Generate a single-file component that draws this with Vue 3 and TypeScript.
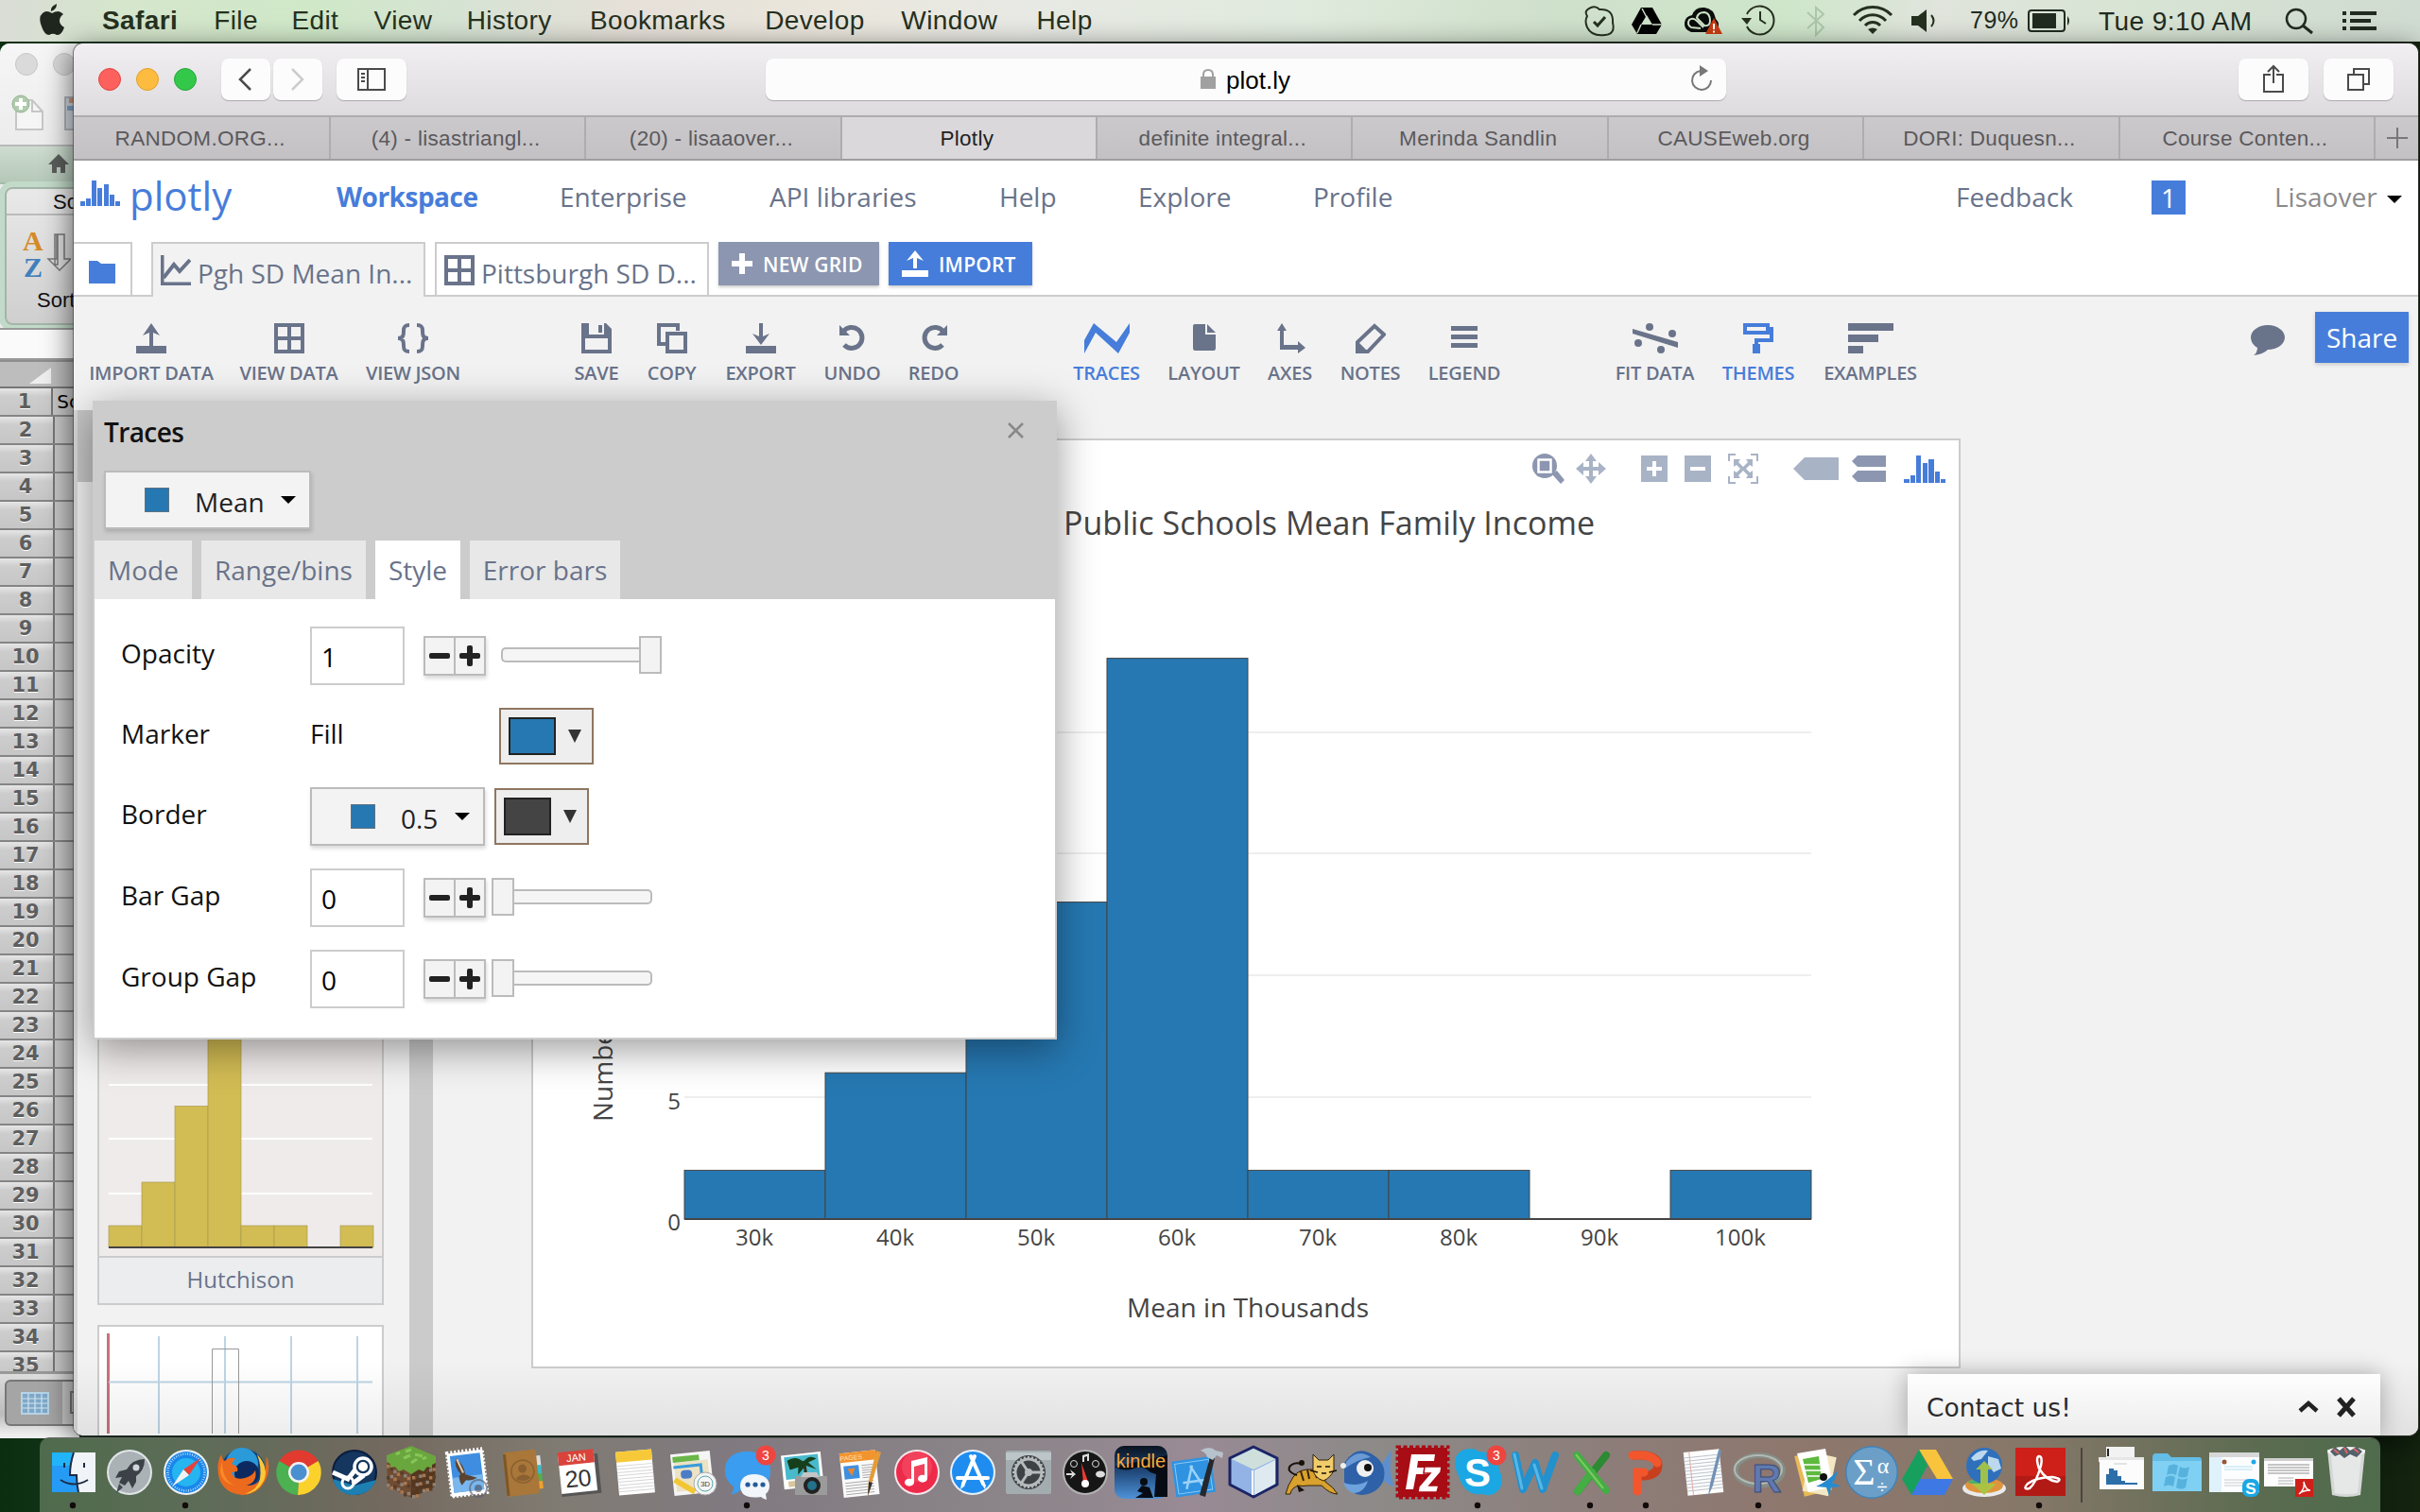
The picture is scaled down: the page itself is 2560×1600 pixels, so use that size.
<script setup lang="ts">
interface Tool { label: string; w: number; iw: number; art: string; on?: boolean }
interface DockItem { art: string; run?: boolean; badge?: string }

const S = '#69738a'
const menus = [
  { t: 'Safari', w: 80, b: true }, { t: 'File', w: 44 }, { t: 'Edit', w: 49 }, { t: 'View', w: 60 },
  { t: 'History', w: 92 }, { t: 'Bookmarks', w: 147 }, { t: 'Develop', w: 106 }, { t: 'Window', w: 105 }, { t: 'Help', w: 61 },
]
const tabs = ['RANDOM.ORG...', '(4) - lisastriangl...', '(20) - lisaaover...', 'Plotly', 'definite integral...', 'Merinda Sandlin', 'CAUSEweb.org', 'DORI: Duquesn...', 'Course Conten...']
const nav = [
  { t: 'Workspace', w: 147 }, { t: 'Enterprise', w: 133 }, { t: 'API libraries', w: 154 },
  { t: 'Help', w: 58 }, { t: 'Explore', w: 96 }, { t: 'Profile', w: 82 },
]
const gridArt = `<path fill="none" stroke="${S}" stroke-width="4" d="M2 2h28v28H2zM16 2v28M2 16h28"/>`
const tools: Tool[][] = [
  [
    { label: 'IMPORT DATA', w: 130, iw: 32, art: `<path fill="${S}" d="M0 24h32v8H0zM14 24V10l-7 3L16 0l9 13-7-3v14z"/>` },
    { label: 'VIEW DATA', w: 103, iw: 32, art: gridArt },
    { label: 'VIEW JSON', w: 102, iw: 32, art: `<path fill="none" stroke="${S}" stroke-width="4" d="M12 2C7 2 6 4 6 8s0 8-6 8c6 0 6 4 6 8s1 6 6 6M20 2c5 0 6 2 6 6s0 8 6 8c-6 0-6 4-6 8s-1 6-6 6"/>` },
  ],
  [
    { label: 'SAVE', w: 46, iw: 32, art: `<path fill="${S}" fill-rule="evenodd" d="M0 0h26l6 6v26H0zM8 0v12h16V0zM4 16v12h24V16z"/><path fill="${S}" d="M18 2h4v8h-4z"/>` },
    { label: 'COPY', w: 53, iw: 32, art: `<path fill="none" stroke="${S}" stroke-width="4" d="M10 22H2V2h20v6M11 11h19v19H11z"/>` },
    { label: 'EXPORT', w: 75, iw: 32, art: `<path fill="${S}" d="M0 24h32v8H0zM14 0h4v14l7-3-9 12-9-12 7 3z"/>` },
    { label: 'UNDO', w: 59, iw: 32, art: `<path fill="none" stroke="${S}" stroke-width="5" d="M6 9a11 11 0 1 1 1 14"/><path fill="${S}" d="M2 2v11h11z"/>` },
    { label: 'REDO', w: 53, iw: 32, art: `<path fill="none" stroke="${S}" stroke-width="5" d="M26 9a11 11 0 1 0-1 14"/><path fill="${S}" d="M30 2v11H19z"/>` },
  ],
  [
    { label: 'TRACES', w: 71, iw: 48, on: true, art: '<path fill="#477dda" d="M0 32V18L10 0l24 20L48 0v10L36 32 12 10z"/>' },
    { label: 'LAYOUT', w: 75, iw: 24, art: `<path fill="${S}" d="M0 3q0-2 2-2h11v11h11v14q0 3-2 3H2q-2 0-2-3zM15 1l9 9h-9z"/>` },
    { label: 'AXES', w: 47, iw: 32, art: `<path fill="${S}" d="M2 8L7 0l5 8H9v15h15v-4l8 7-8 6v-4H5V8z"/>` },
    { label: 'NOTES', w: 63, iw: 32, art: `<path fill="none" stroke="${S}" stroke-width="4" d="M20 3l10 9-17 18H2V20z"/><path fill="${S}" d="M3 20l4 4 5 5-3 3H0V22z"/>` },
    { label: 'LEGEND', w: 76, iw: 28, art: `<path fill="${S}" d="M0 3h28v5H0zM0 12h28v5H0zM0 21h28v5H0z"/>` },
  ],
  [
    { label: 'FIT DATA', w: 81, iw: 48, art: `<path fill="${S}" d="M0 6l48 14v6L0 11z"/><g fill="${S}"><circle cx="18" cy="4" r="4"/><circle cx="42" cy="11" r="4"/><circle cx="6" cy="21" r="4"/><circle cx="30" cy="28" r="4"/></g>` },
    { label: 'THEMES', w: 78, iw: 32, on: true, art: '<path fill="none" stroke="#477dda" stroke-width="4" d="M2 2h24v8H2zM26 6h4v12H14v6"/><path fill="#477dda" d="M10 22h8v10h-8z"/>' },
    { label: 'EXAMPLES', w: 99, iw: 48, art: `<path fill="${S}" d="M0 0h48v8H0zM0 12h32v8H0zM0 24h16v8H0z"/>` },
  ],
]
const rows = Array.from({ length: 35 }, (_, i) => i + 1)
const unit = 25.8
const bars = [2, 6, 13, 23, 2, 2, 0, 2].map((n, i) => ({ n, x: 161 + i * 149, y: 825 - n * unit, h: n * unit, label: (i + 3) * 10 + 'k' }))
const thumb = [2, 6, 13, 23, 2, 2, 0, 2].map((n, i) => ({ n, x: 10 + i * 35, y: 318 - n * 11.5, h: n * 11.5 }))
const gaps = ['Bar Gap', 'Group Gap']

const circ = (a: string, b: string) => `<circle cx="30" cy="36" r="24" fill="${a}"/><circle cx="30" cy="36" r="22" fill="${b}"/>`
const T = (x: number, y: number, s: number, c: string, t: string, extra = '') => `<text x="${x}" y="${y}" font-size="${s}" fill="${c}" text-anchor="middle" font-family="Liberation Sans, sans-serif" ${extra}>${t}</text>`
const teeth = Array.from({ length: 24 }, (_, i) => `<path d="M29 19h2v4h-2z" transform="rotate(${i * 15} 30 36)"/>`).join('')
const lines = (x: number, y: number, w: number, n: number, g: number, c = '#c4c4c4') => Array.from({ length: n }, (_, i) => `<path d="M${x} ${y + i * g}h${w}" stroke="${c}" stroke-width="1"/>`).join('')
const pix = Array.from({ length: 42 }, (_, i) => {
  const left = i % 2 === 0
  const k = Math.floor(i / 2)
  const cx = (k % 7) * 3.6
  const cy = Math.floor(k / 7) * 9 + ((k * 5) % 4)
  const x = left ? 4 + cx : 31 + cx
  const y = left ? 28 + cx * 0.5 + cy : 40 - cx * 0.5 + cy
  return `<path d="M${x} ${y}h3.5v3.5h-3.5z" fill="${['#a9774f', '#5c3d28', '#8d8178'][k % 3]}"/>`
}).join('')

const dock: DockItem[] = [
  { run: true, art: '<path fill="#f0f4f8" d="M7 15h46v42H7z"/><path fill="#259bf5" d="M7 15h23q-4 12-4 24h7q0 10 2 18H7z"/><path fill="#20c5fb" opacity=".6" d="M7 15h23q-4 8-4 14H7z"/><path d="M20 26v5M41 26v5M16 44q14 9 29 0M30 15q-4 12-4 24h7q0 10 2 18" fill="none" stroke="#1c2b45" stroke-width="2"/>' },
  { art: circ('#dfe5e8', '#aab2b6') + '<path d="M46 22q-13 0-19 11l-8 2-4 7 7-1-3 6 6 3 4-5 4 8 4-7v-6q9-6 9-18z" fill="#3b4146"/><circle cx="37" cy="31" r="3.5" fill="#cfd6d9"/><path d="M19 48l-3 10 7-6z" fill="#444b50"/>' },
  { run: true, art: circ('#eef2f6', '#1a86ea') + '<circle cx="30" cy="36" r="15" fill="#25b5f0"/><circle cx="30" cy="36" r="19.5" fill="none" stroke="#cfe6fa" stroke-width="2.5" stroke-dasharray=".8 1.7"/><path d="M45 21L33 39l-6-6z" fill="#e8403a"/><path d="M15 51l12-18 6 6z" fill="#f2f2f2"/>' },
  { art: '<circle cx="31" cy="35" r="24" fill="#12407f"/><circle cx="30" cy="27" r="17" fill="#2a9ad8"/><circle cx="35" cy="37" r="13" fill="#0c2a60"/><path d="M8 17q1 6 4 7 4-4 11-3l-4 6q8 3 6 8l-6 1q2 9 14 6 8-2 11-8 3 12-9 16 14 1 20-17l1-14q4 9 1 20Q50 59 31 60 12 59 6 43 2 28 8 17z" fill="#ec6a1d"/><path d="M46 17q13 14 7 28-7 13-20 14 14-5 16-16 2-13-3-26z" fill="#fcc934"/><path d="M9 24q0 20 13 26-15-4-15-17z" fill="#f98b27"/>' },
  { art: '<path d="M30 36L9.5 24A24 24 0 0 1 50.500 24z" fill="#e23a2e"/><path d="M30 36l20.500-12A24 24 0 0 1 29 60z" fill="#fbd22b"/><path d="M30 36l-1 24A24 24 0 0 1 9.500 24z" fill="#4bb151"/><path d="M50 24H30v12z" fill="#e23a2e"/><circle cx="30" cy="36" r="11" fill="#f3f3f3"/><circle cx="30" cy="36" r="8.500" fill="#4a8fd0"/>' },
  { art: circ('#0a1d3c', '#14365f') + '<path d="M7 43q4 15 20 17 19 1 26-16L30 50z" fill="#1d7fb2"/><circle cx="39" cy="30" r="9" fill="none" stroke="#fff" stroke-width="3.500"/><circle cx="39" cy="30" r="5" fill="#fff"/><circle cx="23" cy="47" r="6" fill="none" stroke="#fff" stroke-width="3"/><path d="M7 36l18 8M31 33l-7 9M40 39l-12 9" stroke="#fff" stroke-width="5"/>' },
  { art: '<path fill="#6f4c33" d="M4 19l26 13v31L5 51z"/><path fill="#54371f" d="M56 19L30 32v31l25-12z"/>' + pix + '<path fill="#6aa63e" d="M30 8l26 11v7l-4 2v4l-5-2-4 5-5-2-8 5-8-5-5 2-4-5-5 1v-4l-4-2v-7z"/><path d="M14 17l4-2M24 14l6-2M22 21l7-3M34 17l8 2M30 26l6-4M42 22l4-2" stroke="#87c556" stroke-width="3"/>' },
  { art: '<g transform="rotate(-7 30 36)"><path fill="#fff" d="M11 14h38v46H11z"/><path fill="none" stroke="#fff" stroke-width="3" stroke-dasharray="2 2" d="M11 13h38v47H11z"/><path fill="#3f8de0" d="M14 17h32v39H14z"/><path d="M14 40h32v16H14z" fill="#79b7ee"/><path d="M20 20q8 8 8 18l12 5q-7 3-12 1l-5 5q-4-9 0-12-6-8-3-17z" fill="#5a4330"/><path d="M21 21l5 15" stroke="#d9cbb8" stroke-width="2"/></g><circle cx="42" cy="53" r="9" fill="none" stroke="#5b5f70" stroke-width="2" opacity=".65"/><circle cx="42" cy="53" r="4" fill="#44495c" opacity=".6"/>' },
  { art: '<g transform="rotate(-6 30 36)"><path d="M44 20h5v12h-5z" fill="#ddd"/><path d="M44 30h5v10h-5z" fill="#3eb8c8"/><path d="M44 39h5v8h-5z" fill="#52b04c"/><path d="M44 47h5v8h-5z" fill="#f0a02d"/><rect x="10" y="13" width="35" height="47" rx="3" fill="#a87739"/><path d="M10 15h3v44h-3z" fill="#7f5627"/><circle cx="29" cy="35" r="12" fill="none" stroke="#8a6030" stroke-width="1.500"/><circle cx="29" cy="32" r="4.500" fill="#8a6030"/><path d="M21 42q8-7 16 0-8 6-16 0z" fill="#8a6030"/></g>' },
  { art: '<g transform="rotate(-6 30 36)"><path fill="#555" d="M9 18h42v42H9z"/><path fill="#fff" d="M9 15h38v42H9z"/><path fill="#d9433b" d="M9 13h38v14H9z"/>' + T(28, 24, 11, '#fff', 'JAN') + T(28, 51, 25, '#333', '20') + '</g>' },
  { art: '<g transform="rotate(-5 30 36)"><path fill="#fff" d="M11 13h38v46H11z"/><path fill="#f7c938" d="M11 13h38v11H11z"/>' + lines(11, 28, 38, 9, 3.4, '#d5d5d5') + '</g>' },
  { art: '<g transform="rotate(-6 30 36)"><path fill="#f5f5f5" d="M9 15h42v44H9z"/><path fill="#ece2c4" d="M12 24h36v31H12z"/><path fill="#6ab648" d="M11 18h28v6H11z"/><path d="M11 29h29v18" fill="none" stroke="#3a9bd9" stroke-width="3"/><path d="M11 42l20 15" stroke="#f3c633" stroke-width="6"/><rect x="18" y="33" width="12" height="9" rx="4" fill="#4d7cc7"/></g><circle cx="44" cy="48" r="12" fill="#f5f5f5" stroke="#aaa"/><circle cx="44" cy="48" r="8" fill="none" stroke="#5aa7a8"/>' + T(44, 51, 8, '#444', '3D') },
  { run: true, badge: '3', art: '<path d="M30 14c15 0 24 9 24 21S44 56 30 56q-4 0-8-1-4 4-10 4 4-4 3-8-9-6-9-16 0-21 24-21z" fill="#3a9df0"/><path d="M37 38c10 0 16 5 16 12q0 6-4 9l1 6q-4-1-6-3-22 3-22-12 1-12 15-12z" fill="#f1f6fb"/><g fill="#245a9a"><circle cx="30" cy="49" r="2.600"/><circle cx="38" cy="49" r="2.600"/><circle cx="46" cy="49" r="2.600"/></g>' },
  { art: '<g transform="rotate(-6 30 36)"><path fill="#fff" d="M7 16h42v36H7z"/><path fill="#49b9cc" d="M10 18h36v24H10z"/><path d="M12 44h34v6H12z" fill="#d8c79d"/><path d="M29 46q4-10 1-22" stroke="#3a2b19" stroke-width="3" fill="none"/><path d="M13 22q10-5 17 3 7-8 14-2l-9 3 8 8-11-5-9 9 1-8-9 2z" fill="#163f1b"/></g><path fill="#9b9b9b" d="M20 40h34v20H20z"/><path fill="#c5c5c5" d="M29 36h14l3 5H26z"/><circle cx="38" cy="50" r="9" fill="#222"/><circle cx="38" cy="50" r="5" fill="#23718a"/>' },
  { art: '<g transform="rotate(-6 30 36)"><path fill="#fafafa" d="M10 14h38v47H10z"/><path fill="#f2942e" d="M10 14h38v10H10z"/>' + T(22, 22, 7, '#ffe0b5', 'PAGES') + '<path fill="#3f8fe0" d="M13 28h16v14H13z"/><path d="M17 31h8l-4 8z" fill="#ec862c"/>' + lines(32, 29, 12, 6, 2.6, '#aaa') + lines(13, 46, 30, 5, 3, '#aaa') + '</g><path d="M47 13l5 2-10 33-4 13 1-16z" fill="#e79b35"/><path d="M39 46l4 1-5 14z" fill="#333"/>' },
  { art: circ('#f4e7ea', '#ee2a4b') + '<circle cx="30" cy="30" r="16" fill="#f6576c" opacity=".5"/><path d="M24 24l17-4v23a5 4 0 1 1-3-4V27l-11 3v17a5 4 0 1 1-3-4z" fill="#fff"/>' },
  { art: circ('#e8f1f8', '#1f8df0') + '<path d="M32 19L20 48M28 19l13 29M14 42h32" stroke="#fff" stroke-width="4" stroke-linecap="round" fill="none"/><path d="M18 48l-1 6 5-4zM39 48l4 6 1-5z" fill="#fff"/>' },
  { art: '<rect x="6" y="13" width="48" height="46" rx="2" fill="#a3adb0"/><path d="M6 15h48v8H6z" fill="#c6d0d3" opacity=".7"/><circle cx="30" cy="36" r="18" fill="#3e4244"/><circle cx="30" cy="36" r="14" fill="none" stroke="#b6bbbd" stroke-width="3"/><g fill="#b6bbbd">' + teeth + '</g><circle cx="30" cy="36" r="4" fill="#b6bbbd"/><path d="M30 36L22 24M30 36h14M30 36l-8 12" stroke="#b6bbbd" stroke-width="3"/>' },
  { art: circ('#b3b3b3', '#161616') + '<path d="M26 26l7 20-5 2z" fill="#ee3a34"/><circle cx="30" cy="48" r="4" fill="#fff"/><g fill="#ddd"><path d="M27 18l7-2v8h-2v-5l-3 1v5h-2z"/><path d="M10 37l6 0-2-4 6 5-6 5 2-4-6 0z"/><ellipse cx="46" cy="38" rx="5" ry="3.500"/></g><circle cx="41" cy="27" r="3.500" fill="none" stroke="#ddd"/><circle cx="18" cy="27" r="3.500" fill="none" stroke="#ddd"/>' },
  { art: '<defs><linearGradient id="kd" x1="0" y1="0" x2="0" y2="1"><stop offset="0" stop-color="#0a1320"/><stop offset=".5" stop-color="#214a7c"/><stop offset="1" stop-color="#4f93d8"/></linearGradient></defs><rect x="2" y="8" width="56" height="56" rx="10" fill="url(#kd)"/><path d="M2 30q10 6 20 2t18 4l6 2-2 24h14V18z" fill="#070c14"/><circle cx="33" cy="46" r="4" fill="#070c14"/><path d="M31 50l8 2 4 11H24l8-5-6-2z" fill="#070c14"/>' + T(30, 31, 20, '#f8a83c', 'kindle') },
  { art: '<g transform="rotate(-8 30 36)"><path fill="#2f93e2" d="M4 21h42v38H4z"/><path fill="none" stroke="#8ccaf5" d="M7 24h36v32H7z"/><path d="M25 28l-9 24M23 28l11 24M13 45h25" stroke="#9bd2f7" stroke-width="2.500" fill="none"/></g><path d="M43 20l5 1-10 41-6-2z" fill="#24272c"/><path d="M33 13q9-6 16 0l8 2-1 6-6-3-4 5-6-3q-1-5-7-7z" fill="#b7c3cc"/>' },
  { art: '<path d="M30 9l25 12v28L30 62 5 49V21z" fill="#93b3e6" stroke="#1b2464" stroke-width="3" stroke-linejoin="round"/><path d="M30 11l23 11-23 11L7 22z" fill="#cfe0dc"/><path d="M31 34l22-11v25L31 60z" fill="#dfeaf0"/><path d="M29 34v26" stroke="#fff" stroke-width="2"/>' },
  { art: '<path d="M12 41q6-9 20-8l12 3 2 10q9 6 13 13-8 0-17-9l-14 0q-7 1-10 0-8 2-9 9H4q2-9 8-18z" fill="#d9a12d" stroke="#322106"/><path d="M20 35l3 10M27 33l2 10M34 33l3 9" stroke="#37250c" stroke-width="2"/><path d="M16 39Q4 35 9 29q5-4 11-2" fill="none" stroke="#171107" stroke-width="2"/><circle cx="21" cy="26" r="3" fill="#171107"/><path d="M33 17l6 6h10l6-6v17q-4 8-11 11-9-3-11-11z" fill="#f0cc6b" stroke="#322106"/><path d="M37 30h5M46 30h5M42 37h5M30 34l8 2M50 36l8-2" stroke="#171107" stroke-width="1.500"/><path d="M16 49l8 6-6 2z" fill="#171107"/>' },
  { art: '<path d="M45 30l12-18q-2 16-1 25 2 7 3 14-9-3-13-10z" fill="#5d8fce"/><path d="M7 26q14-22 34-6 12 10 7 26-7 13-22 14-12 0-19-14z" fill="#2e61a8"/><path d="M6 47q14 5 26-2-4 13-16 13-7-3-10-11z" fill="#6da2dc"/><path d="M9 25q12-15 26-5-13 2-26 11z" fill="#6b9ad4"/><circle cx="29" cy="32" r="9" fill="#efefef"/><circle cx="32" cy="31" r="4" fill="#111"/><circle cx="6" cy="29" r="3" fill="#eee"/>' },
  { art: '<path fill="#a80c14" d="M4 10h52v52H4z"/><path fill="none" stroke="#a80c14" stroke-width="3" stroke-dasharray="4 2.500" d="M3 9h54v54H3z"/><path d="M18 17h25l-1 7H25l-1 7h12l-1 7H23l-3 16h-8z" fill="#fff"/><path d="M32 30h18l-1 6-12 14h10l-2 7H25l1-6 12-14h-7z" fill="#fff" stroke="#a80c14" stroke-width="1.500"/>' },
  { run: true, badge: '3', art: '<path d="M22 11q5 0 8 3 20 0 22 20 6 10 0 20-8 9-17 5-19 3-26-19Q4 31 6 20q4-9 16-9z" fill="#1ba7e3"/>' + T(29, 51, 42, '#fff', 'S', 'font-weight="bold"') },
  { art: '<path d="M10 18l8 36 13-28 8 28 13-36" fill="none" stroke="#2391cd" stroke-width="8" stroke-linecap="round" stroke-linejoin="round"/><path d="M9 17l8 36M30 28l8 25" fill="none" stroke="#54b8e8" stroke-width="3" stroke-linecap="round"/>' },
  { run: true, art: '<path d="M46 18L16 56" stroke="#2c8a32" stroke-width="8" stroke-linecap="round"/><path d="M15 18l31 37M31 36L16 56" stroke="#44ad43" stroke-width="8" stroke-linecap="round"/><path d="M14 17l29 36" stroke="#7acb62" stroke-width="2"/>' },
  { run: true, art: '<path d="M15 18h12q15 2 15 10 0 11-15 12h-6" fill="none" stroke="#c93f1e" stroke-width="9"/><path d="M15 18h12q12 2 14 8M20 56V36h7" fill="none" stroke="#f2562d" stroke-width="9" stroke-linecap="round"/>' },
  { art: '<g transform="rotate(-6 30 36)"><path fill="#fdfdfd" d="M11 13h38v46H11z"/>' + lines(11, 19, 38, 11, 3.5, '#bbc3cc') + '<path d="M17 13v46" stroke="#e7a9a4"/></g><path d="M46 12l3 1-9 37-5 11 2-13z" fill="#7291b5"/>' },
  { run: true, art: '<ellipse cx="30" cy="34" rx="25" ry="16" fill="none" stroke="#858d86" stroke-width="6"/><ellipse cx="29" cy="33" rx="25" ry="15" fill="none" stroke="#b3bab2" stroke-width="2"/>' + T(38, 57, 43, '#6079ae', 'R', 'font-weight="bold" stroke="#394c7a"') },
  { art: '<g transform="rotate(-14 30 36)"><path fill="#e9b958" d="M12 14h30v44H12z"/></g><g transform="rotate(12 30 36)"><path fill="#f4e8c4" d="M20 16h28v42H20z"/></g><path fill="#fff" d="M10 16l30-5 8 40-26 6z"/><path d="M16 22l17-3 3 24-14 4z" fill="#5eb93f"/><path d="M17 28h17M19 34h16M21 40h15" stroke="#fff" stroke-width="1.500"/><circle cx="38" cy="41" r="4" fill="#111"/><path d="M53 34q-2 10-6 13l10 4-11 1-2 9-3-9-11-1q12-5 23-17z" fill="#258bd0"/>' },
  { art: '<circle cx="30" cy="36" r="28" fill="#4183b9"/><circle cx="30" cy="36" r="26.500" fill="#6b9fc8"/>' + T(22, 49, 40, '#fff', 'Σ', 'style="font-family:Liberation Serif,serif"') + T(42, 37, 24, '#fff', 'α', 'style="font-family:Liberation Serif,serif"') + T(41, 58, 20, '#fff', '÷') },
  { art: '<path d="M21 12h18l18 31H40z" fill="#f8c43d"/><path d="M20 43h37l-9 17H13z" fill="#3e78e4"/><path d="M21 12L3 43l10 17 17-31z" fill="#17a05d"/>' },
  { art: '<ellipse cx="30" cy="53" rx="23" ry="9" fill="#e9ebeb"/><ellipse cx="30" cy="50" rx="20" ry="8" fill="#e0933d"/><path d="M12 47q8-6 18-6v9z" fill="#4eaf6a"/><circle cx="30" cy="29" r="19" fill="#2f70bd"/><path d="M16 21q8-10 18-8l-7 9-8 2zM34 19l11 3 3 10-8 4-6-8z" fill="#bcd8ef"/><path d="M30 24l9 9h-5v15h9L30 60 17 48h9V33h-5z" fill="#a9c643" opacity=".93"/>' },
  { run: true, art: '<path fill="#cf1f19" d="M4 10h53v51H4z"/><path fill="#8f1511" opacity=".45" d="M4 40h53v21H4z"/><path d="M29 19q4 0 2 10-5 18-12 24-8 2-2-5 10-7 26-7 12 2 5 5-11-1-19-14-4-12 0-13z" fill="none" stroke="#fff" stroke-width="2.500"/>' },
]
const dockRight: DockItem[] = [
  { art: '<path fill="#f2f2f2" d="M14 9h30v12H14z"/><path d="M15 11h2v8h-2z" fill="#222"/><path fill="#e6e6e6" d="M6 20h48v5H6z"/><path fill="#fcfcfc" d="M7 23h47v31H7z"/><path d="M14 49V38h3v-6h5v2h4v6h4v5h4v2h13v2z" fill="#2b6ea8"/><path d="M22 27h14" stroke="#ccc"/>' },
  { art: '<path fill="#64bde6" d="M4 20q0-4 4-4h12l4 4h29q3 0 3 3v33H4z"/><path fill="#7fd0f3" d="M4 24h52v32H4z"/><path d="M21 29q6-3 10 0l-2 10q-5-3-10 0zM33 30q5 3 10 0l-2 10q-5 3-10 0zM18 41q6-3 10 0l-2 10q-5-3-10 0zM31 42q5 3 10 0l-2 10q-5 3-10 0z" fill="#56b2dd"/>' },
  { art: '<path fill="#fbfdff" d="M4 15h53v42H4z"/><path fill="#d7d7d7" d="M4 15h53v5H4z"/><path fill="#dff1fb" d="M4 20h13v37H4z"/>' + lines(20, 30, 30, 2, 3, '#b9dff0') + lines(20, 44, 24, 3, 3, '#ccc') + '<circle cx="20" cy="25" r="2.500" fill="#9a5535"/><circle cx="51" cy="25" r="2.500" fill="#22a7e8"/><rect x="39" y="43" width="18" height="19" rx="7" fill="#1ba7e3"/>' + T(48, 59, 17, '#fff', 'S', 'font-weight="bold"') },
  { art: '<path fill="#fdfdfd" d="M3 21h52v30H3z"/><path fill="#cfcfcf" d="M3 21h52v3H3z"/>' + lines(7, 28, 44, 4, 3, '#8f8f8f') + lines(18, 42, 16, 3, 3, '#b0b0b0') + '<path fill="#cf1f19" d="M36 43h19v19H36z"/><path d="M45 46q2 7-5 13 4-4 12-4-5 0-7-9" fill="none" stroke="#fff" stroke-width="1.500"/>' },
  { art: '<path d="M10 12h40l-5 48q-15 4-30 0z" fill="#d5d7d7"/><path d="M14 18h32l-4 40q-12 2-24 0z" fill="#e6e8e8"/><ellipse cx="30" cy="14" rx="20" ry="5" fill="#f3f3f3"/><path d="M13 14l5-5 5 4 6-5 5 5 7-4 6 5-6 6-7-3-6 4-5-4-5 2z" fill="#53616a"/><path d="M17 12l5 4M28 10l3 6M38 11l5 4" stroke="#d66" stroke-width="2"/>' },
]
</script>

<template>
  <div class="desk">
    <header class="menubar">
      <svg class="apple" width="28" height="34" viewBox="0 0 28 34"><path d="M19 1q0 6-6 8-1-5 6-8zM14 11q3-2 7-2 3 1 5 3-4 3-4 7t5 7q-3 8-7 8-2 0-3-1-3-1-6 1-5 0-8-9-4-10 1-14 4-4 10 0z" fill="#1e261d" /></svg>
      <nav class="menus"><span v-for="m in menus" :key="m.t" :class="{ bold: m.b }" :style="{ width: m.w + 'px' }">{{ m.t }}</span></nav>
      <div class="status">
        <svg width="884" height="44" viewBox="1676 0 884 44">
          <path d="M1683 8q5-2 9 2 15-1 14 14 3 12-8 13-14 2-19-8-3-7 0-12-4-6 4-9z" fill="none" stroke="#26301f" stroke-width="2" />
          <path d="M1686 23l4 4 8-9" fill="none" stroke="#26301f" stroke-width="3" />
          <path d="M1736 8h12l10 18-6 10h-20l-6-10zM1742 16l-6 10h12z" fill="#000" fill-rule="evenodd" /><path d="M1737 9l9 17M1748 26h10M1736 26l-4 9" stroke="#cfdfca" stroke-width="1.500" />
          <path d="M1789 34q-8-3-7-10 1-7 8-8 3-9 13-8 10 1 12 12 5 5 2 11-3 4-10 3z" fill="#0b0d0b" /><path d="M1803 13q-7 0-8 6l8 8q6 1 6-5 0-8-6-9zM1799 30l-10-1q-5-3-2-8 4-3 8 1l7 7" fill="none" stroke="#cfe3ca" stroke-width="2" />
          <path d="M1813 19l9 17h-18z" fill="#c93c12" /><path d="M1813 25v6M1813 32.500v2" stroke="#fff" stroke-width="2" />
          <path d="M1848 15a15 15 0 1 1 0 13M1862 12v9l6 4" fill="none" stroke="#26301f" stroke-width="2" /><path d="M1842 19h11l-5 7z" fill="#26301f" />
          <path d="M1912 13l17 16-8 8V8l8 7-17 15" fill="none" stroke="#adc6a9" stroke-width="2" />
          <g fill="none" stroke="#26301f" stroke-width="3"><path d="M1961 16a28 28 0 0 1 40 0M1967 22a19 19 0 0 1 28 0M1973 27a11 11 0 0 1 16 0" /></g><path d="M1976 31q5-3 10 0l-5 5z" fill="#26301f" />
          <path d="M2022 17h7l9-7v24l-9-7h-7z" fill="#26301f" /><path d="M2043 16q5 6 0 12" fill="none" stroke="#26301f" stroke-width="2" />
          <text x="2084" y="30" font-size="25" textLength="51" fill="#222b20">79%</text>
          <rect x="2146" y="11" width="38" height="22" rx="3" fill="none" stroke="#222b20" stroke-width="2" /><path d="M2150 14h25v16h-25z" fill="#222b20" /><path d="M2187 17q4 5 0 10z" fill="#222b20" />
          <text x="2220" y="32" font-size="28" textLength="162" fill="#222b20">Tue 9:10 AM</text>
          <circle cx="2429" cy="20" r="10" fill="none" stroke="#222b20" stroke-width="2.500" /><path d="M2436 27l10 8" stroke="#222b20" stroke-width="3" />
          <path d="M2478 12h4v4h-4zM2478 20h4v4h-4zM2478 28h4v4h-4zM2486 12h28v4h-28zM2486 20h22v4h-22zM2486 28h28v4h-28z" fill="#222b20" />
        </svg>
      </div>
    </header>

    <section class="excel">
      <svg class="xtitle" width="80" height="107" viewBox="0 0 80 107">
        <circle cx="28" cy="22" r="11.500" fill="#dadada" stroke="#c6c6c6" /><circle cx="68" cy="22" r="11.500" fill="#dadada" stroke="#c6c6c6" />
        <path d="M17 60h17l11 12v19H17z" fill="#f5f5f5" stroke="#c6c6c6" stroke-width="2" /><path d="M34 60v12h11" fill="none" stroke="#c6c6c6" stroke-width="2" />
        <circle cx="22" cy="64" r="9" fill="#b0cbae" stroke="#93b290" /><path d="M22 58v12M16 64h12" stroke="#fff" stroke-width="4" />
        <path d="M69 57h12v34H69z" fill="#d5dbe2" stroke="#b1b5bb" stroke-width="2" /><path d="M71 66h9v5h-9z" fill="#86a7d2" /><path d="M73 58h6v5h-6z" fill="#d39a82" />
      </svg>
      <div class="xgreen"><svg width="24" height="24" viewBox="0 0 24 24"><path d="M12 1l11 11h-4v9h-5v-6h-4v6H5v-9H1z" fill="#5b5e5c" /></svg></div>
      <div class="xribbon">
        <div class="xr-head">So</div>
        <svg width="68" height="62" viewBox="0 0 68 62"><text x="17" y="25" font-size="30" font-weight="bold" class="serif" fill="#d58a28">A</text><text x="18" y="53" font-size="30" font-weight="bold" class="serif" fill="#3f7fbd">Z</text><path d="M51 8h3v32h-3zM57 8h4v26h7L56 46 44 34h9V8z" fill="#ddd" stroke="#777" stroke-width="1.500" /></svg>
        <div class="xr-foot">Sort</div>
      </div>
      <div class="xformula"></div>
      <div class="xcorner"><i></i></div>
      <div class="xrows">
        <div v-for="r in rows" :key="r" class="xrow"><b>{{ r }}</b><span>{{ r === 1 ? 'Sc' : '' }}</span></div>
      </div>
      <div class="xbottom">
        <svg width="80" height="60" viewBox="0 0 80 60"><rect x="6" y="5" width="90" height="47" rx="5" fill="#a5a5a5" stroke="#777" stroke-width="2" /><path d="M66 6h14v45H66z" fill="#c9c9c9" /><rect x="23" y="18" width="28" height="22" fill="#7da8c9" stroke="#b7d3e6" stroke-width="2" /><path d="M24 24h26M24 29h26M24 34h26M30 19v20M37 19v20M44 19v20" stroke="#d3e3ee" stroke-width="1.200" /><path d="M80 17h-5v22h5" fill="none" stroke="#777" stroke-width="2" /></svg>
      </div>
    </section>

    <section class="safari">
      <div class="chrome">
        <i class="light red"></i><i class="light yel"></i><i class="light grn"></i>
        <div class="btn b1"><svg width="52" height="44" viewBox="0 0 52 44"><path d="M31 11L20 22l11 11" fill="none" stroke="#4a4a4a" stroke-width="2.500" /></svg></div>
        <div class="btn b2"><svg width="52" height="44" viewBox="0 0 52 44"><path d="M20 11l11 11-11 11" fill="none" stroke="#ccc" stroke-width="2.500" /></svg></div>
        <div class="btn b3"><svg width="74" height="44" viewBox="0 0 74 44"><path d="M23 11h28v22H23zM33 11v22M26 16h4M26 20h4M26 24h4" fill="none" stroke="#4a4a4a" stroke-width="2" /></svg></div>
        <div class="url">
          <svg width="16" height="22" viewBox="0 0 16 22"><path d="M0 8h16v13H0z" fill="#a0a0a0" /><path d="M3 9V6q0-5 5-5t5 5v3" fill="none" stroke="#a0a0a0" stroke-width="2" /></svg>
          <span>plot.ly</span>
          <svg class="reload" width="26" height="30" viewBox="0 0 26 30"><path d="M12 6A10 10 0 1 0 23 16" fill="none" stroke="#777" stroke-width="2" /><path d="M11 0l9 6-9 6z" fill="#777" /></svg>
        </div>
        <div class="btn b4"><svg width="74" height="44" viewBox="0 0 74 44"><path d="M34 17h-7v18h20V17h-7M37 26V8M31 14l6-6 6 6" fill="none" stroke="#4a4a4a" stroke-width="2" /></svg></div>
        <div class="btn b5"><svg width="74" height="44" viewBox="0 0 74 44"><path d="M26 17h16v16H26zM32 17v-6h16v16h-6" fill="none" stroke="#4a4a4a" stroke-width="2" /></svg></div>
      </div>
      <div class="tabbar">
        <div v-for="t in tabs" :key="t" class="tab" :class="{ cur: t === 'Plotly' }">{{ t }}</div>
        <div class="plus"><svg width="24" height="24" viewBox="0 0 24 24"><path d="M12 1v22M1 12h22" stroke="#777" stroke-width="2" /></svg></div>
      </div>

      <div class="page">
        <div class="topnav">
          <svg width="42" height="27" viewBox="0 0 42 27"><path d="M0 22h5v5H0zM6 19h5v8H6zM12 0h5v27h-5zM18 8h5v19h-5zM25 4h5v23h-5zM31 15h5v12h-5zM37 22h5v5h-5z" fill="#477dda" /></svg>
          <span class="logo">plotly</span>
          <nav><a v-for="(n, i) in nav" :key="n.t" :class="{ act: i === 0 }" :style="{ width: n.w + 'px' }">{{ n.t }}</a></nav>
          <span class="feedback">Feedback</span>
          <span class="count">1</span>
          <span class="user">Lisaover</span><i class="caret"></i>
        </div>
        <div class="files">
          <div class="folder"><svg width="28" height="24" viewBox="0 0 28 24"><path d="M0 0h9l4 3h15v21H0z" fill="#477dda" /></svg></div>
          <div class="file open"><svg width="32" height="32" viewBox="0 0 32 32"><path d="M1.500 0v30.500H32" fill="none" stroke="#69738a" stroke-width="4" /><path d="M3 24l11-14 6 7L31 5" fill="none" stroke="#69738a" stroke-width="4" /></svg><span>Pgh SD Mean In...</span></div>
          <div class="file"><svg width="32" height="32" viewBox="0 0 32 32" v-html="gridArt"></svg><span>Pittsburgh SD D...</span></div>
          <div class="fbtn grid"><svg width="22" height="22" viewBox="0 0 22 22"><path d="M11 0v22M0 11h22" stroke="#fff" stroke-width="6" /></svg><span>NEW GRID</span></div>
          <div class="fbtn imp"><svg width="28" height="28" viewBox="0 0 28 28"><path d="M0 21h28v7H0zM12 19V8l-7 3 9-11 9 11-7-3v11z" fill="#fff" /></svg><span>IMPORT</span></div>
        </div>

        <div class="toolbar">
          <div v-for="(g, gi) in tools" :key="gi" class="group" :class="'g' + gi">
            <div v-for="t in g" :key="t.label" class="tool" :class="{ on: t.on }" :style="{ width: t.w + 'px' }">
              <svg :width="t.iw" height="32" :viewBox="`0 0 ${t.iw} 32`" v-html="t.art"></svg>
              <span>{{ t.label }}</span>
            </div>
          </div>
          <svg class="chat" width="36" height="32" viewBox="0 0 36 32"><path d="M18 0c10 0 18 6 18 13S28 26 18 26q-5 5-15 6 4-3 4-8-7-4-7-11C0 6 8 0 18 0z" fill="#69738a" /></svg>
          <div class="share">Share</div>
        </div>

        <div class="work">
          <aside class="gallery">
            <div class="stub"></div>
            <div class="card c1">
              <svg width="299" height="327" viewBox="0 0 299 327">
                <rect width="299" height="327" fill="#efebea" />
                <path d="M10 146h279M10 203h279M10 261h279M10 89h279" stroke="#fff" stroke-width="2" />
                <rect v-for="b in thumb.filter(q => q.n)" :key="b.x" :x="b.x" :y="b.y" width="35" :height="b.h" fill="#d2bc54" stroke="#a99c55" stroke-width=".7" />
                <path d="M10 318h279" stroke="#444" stroke-width="2" />
              </svg>
              <div class="cap">Hutchison</div>
            </div>
            <div class="card c2">
              <svg width="299" height="113" viewBox="0 0 299 113">
                <path d="M9.500 7v106" stroke="#c8737a" stroke-width="3" />
                <path d="M63 10v103M133 10v103M203 10v103M273 10v103M10 58.500h279" stroke="#bdd5e6" stroke-width="2" />
                <path d="M119.500 113V23.500h28V113" fill="none" stroke="#999" />
              </svg>
            </div>
          </aside>
          <div class="gscroll"></div>
          <main class="chart">
            <svg width="1508" height="980" viewBox="1 1 1508 980">
              <path d="M161 310h1192M161 438h1192M161 567h1192M161 696h1192" stroke="#eee" stroke-width="2" />
              <rect v-for="b in bars.filter(q => q.n)" :key="b.x" :x="b.x" :y="b.y" width="149" :height="b.h" fill="#2678b2" stroke="#444" stroke-width="1" />
              <path d="M161 825h1192" stroke="#444" stroke-width="2" />
              <g fill="#444" class="os">
                <text v-for="b in bars" :key="b.label" :x="b.x + 74" y="853" font-size="24" text-anchor="middle">{{ b.label }}</text>
                <text x="157" y="709" font-size="24" text-anchor="end">5</text>
                <text x="157" y="836.500" font-size="24" text-anchor="end">0</text>
                <text x="562" y="101" font-size="34" textLength="562">Public Schools Mean Family Income</text>
                <text x="629" y="929" font-size="28" textLength="256">Mean in Thousands</text>
                <text transform="translate(85 722) rotate(-90)" font-size="28">Number</text>
              </g>
              <g fill="#a9b3c6">
                <g fill="#8c96b0"><circle cx="1071" cy="28" r="13" /><path d="M1079 37l5-4 8 10-4 4z" /></g><path d="M1064.500 21.500h13v13h-13z" fill="#8c96b0" stroke="#fff" stroke-width="2.500" />
                <path d="M1120 15l6 8h-4v6h6v-5l8 7-8 7v-5h-6v6h4l-6 8-6-8h4v-6h-6v5l-8-7 8-7v5h6v-6h-4z" />
                <path d="M1173 17h28v28h-28zM1219 17h28v28h-28z" /><path d="M1187 23v16M1179 31h16M1225 31h16" stroke="#fff" stroke-width="4" />
                <path d="M1266 23v-7h7M1289 16h7v7M1296 39v7h-7M1273 46h-7v-7" fill="none" stroke="#a9b3c6" stroke-width="2" /><path d="M1271 21h7l-2 3 5 5 5-5-2-3h7v8l-3-2-4 4 4 4 3-2v8h-7l2-3-5-5-5 5 2 3h-7v-8l3 2 4-4-4-4-3 2z" />
                <path d="M1334 31l12-12h36v24h-36z" /><path d="M1396 23l6-6h30v12h-30zM1396 39l6-6h30v12h-30z" fill="#8c96b0" />
                <path d="M1451 42h6v4h-6zM1458 38h5v8h-5zM1464 17h5v29h-5zM1471 25h5v21h-5zM1477 21h6v25h-6zM1484 34h5v12h-5zM1490 42h5v4h-5z" fill="#477dda" />
              </g>
            </svg>
          </main>
        </div>

        <div class="fade"></div>
        <div class="contact"><span>Contact us!</span>
          <svg width="62" height="24" viewBox="0 0 62 24"><path d="M2 16l9-8 9 8" fill="none" stroke="#222" stroke-width="4.500" /><path d="M43 3l16 18M59 3L43 21" stroke="#222" stroke-width="5" /></svg>
        </div>
      </div>

      <div class="dialog">
        <div class="dhead">
          <div class="dtitle"><span>Traces</span><svg width="17" height="17" viewBox="0 0 17 17"><path d="M1 1l15 15M16 1L1 16" stroke="#888" stroke-width="2.500" /></svg></div>
          <div class="drop mean"><i class="sw"></i><span>Mean</span><i class="caret"></i></div>
          <div class="dtabs"><span style="width:103px">Mode</span><span style="width:174px">Range/bins</span><span class="cur" style="width:90px">Style</span><span style="width:159px">Error bars</span></div>
        </div>
        <div class="dbody">
          <div class="drow"><label>Opacity</label><div class="inp">1</div>
            <div class="pm"><b><i></i></b><b><i></i><i class="v"></i></b></div><div class="slide end"><i></i><b></b></div></div>
          <div class="drow r2"><label>Marker</label><span class="fill">Fill</span><div class="color"><i class="blue"></i><em></em></div></div>
          <div class="drow"><label>Border</label><div class="drop bord"><i class="sw"></i><span>0.5</span><i class="caret"></i></div><div class="color"><i></i><em></em></div></div>
          <div v-for="g in gaps" :key="g" class="drow"><label>{{ g }}</label><div class="inp">0</div>
            <div class="pm"><b><i></i></b><b><i></i><i class="v"></i></b></div><div class="slide"><b></b><i></i></div></div>
        </div>
      </div>
    </section>

    <footer class="dock">
      <div v-for="(d, i) in dock" :key="i" class="dk">
        <svg width="60" height="78" viewBox="0 0 60 78"><g v-html="d.art"></g>
          <ellipse v-if="d.run" cx="29" cy="71" rx="3.200" ry="3.200" fill="#120b0a" />
          <g v-if="d.badge"><circle cx="49" cy="18" r="10.500" fill="#ee4540" /><text x="49" y="23" font-size="14" fill="#fff" text-anchor="middle">{{ d.badge }}</text></g>
        </svg>
      </div>
      <div class="rule"></div>
      <div v-for="(d, i) in dockRight" :key="'r' + i" class="dk"><svg width="60" height="78" viewBox="0 0 60 78" v-html="d.art"></svg></div>
    </footer>
  </div>
</template>

<style>
body { margin: 0; background: #0d2311; overflow: hidden; }
</style>
<style scoped>
* { box-sizing: border-box; }
svg { display: block; flex: none; }
.desk { position: relative; width: 2560px; height: 1600px; overflow: hidden; font-family: "Liberation Sans", Arial, sans-serif; background: linear-gradient(90deg, #0b2d10 0, #123519 3%, #1c2b1b 50%, #0c1c0d 97%, #14240f); }
.os, .page, .dialog { font-family: "Open Sans", sans-serif; }
.serif { font-family: "Liberation Serif", serif; }
.menubar { height: 44px; display: flex; align-items: center; background: linear-gradient(90deg, #dadcd6 0, #d5e6cc 5%, #d0e8c8 13%, #d6e3d4 19%, #e6e0d8 26%, #eae6dc 34%, #e8e9e4 42%, #e0eadd 54%, #cfe0cb 64%, #cfe6cb 74%, #e0e4dc 80%, #d8e4d4 88%, #d0dbd1 100%); font-size: 28px; color: #26311f; }
.apple { margin-left: 41px; position: relative; top: -2px; }
.menus { display: flex; gap: 38.200px; margin-left: 39px; line-height: 46px; white-space: nowrap; }
.menus span { letter-spacing: .4px; }
.bold { font-weight: bold; }
.status { margin-left: auto; }

.excel { position: absolute; left: 0; top: 46px; width: 84px; height: 1476px; overflow: hidden; border-radius: 10px 0 0 0; background: #ececec; }
.xtitle { background: linear-gradient(#f6f6f6, #ececec); }
.xgreen { height: 42px; background: linear-gradient(#cddccf, #b5c8b8); border-top: 2px solid #b9b9b9; border-bottom: 2px solid #a3bca8; padding: 7px 0 0 50px; }
.xribbon { height: 146px; margin-top: 3px; margin-left: 5px; border: 2px solid #a4b5a8; border-radius: 8px 0 0 8px; background: linear-gradient(#e9e9e9, #cfcfcf); box-shadow: 0 0 0 6px #c2dac9; font-size: 22px; color: #111; white-space: nowrap; }
.xr-head { height: 28px; border-bottom: 2px solid #bbb; padding-left: 49px; line-height: 28px; }
.xr-foot { padding-left: 32px; line-height: 32px; }
.xribbon svg { margin-top: 12px; }
.xformula { height: 34px; background: #fafafa; border: 2px solid #999; border-left: 0; margin-top: 3px; }
.xcorner { height: 30px; background: #bdbdbd; border-bottom: 2px solid #777; border-top: 2px solid #8e8e8e; display: flex; width: 84px; }
.xcorner i { margin: 6px 0 0 31px; border-left: 23px solid transparent; border-bottom: 17px solid #eee; height: 0; }
.xrows { height: 1043px; overflow: hidden; border-bottom: 3px solid #999; }
.xrow { height: 30px; display: flex; border-bottom: 2px solid #858585; font-family: "DejaVu Sans", sans-serif; }
.xrow b { width: 58px; border-right: 2px solid #777; padding-right: 2px; text-align: center; font-size: 21px; line-height: 28px; color: #5e5e5e; background: linear-gradient(#e6e6e6, #cdcdcd 30%, #c6c6c6); text-shadow: 0 1px #fff; }
.xrow span { flex: 1; padding-left: 4px; background: #c9c9c9; font: 20px/28px "DejaVu Sans", sans-serif; color: #000; }
.xbottom { height: 71px; background: linear-gradient(#dcdcdc, #bcbcbc 60%, #eee 90%); padding-top: 2px; }

.safari { position: absolute; left: 78px; top: 46px; width: 2480px; height: 1473px; border-radius: 10px; box-shadow: 0 0 0 1px rgba(60, 60, 60, .6), -2px 6px 30px rgba(0, 0, 0, .6); overflow: hidden; background: #f2f2f2; }
.chrome { height: 76px; display: flex; align-items: center; background: linear-gradient(#f1eff2, #dddbde); padding-left: 26px; }
.light { width: 24px; height: 24px; border-radius: 50%; margin-right: 16px; border: 1px solid #e0443e; background: #fc615d; }
.yel { background: #fdbc40; border-color: #e0a02a; }
.grn { background: #34c84a; border-color: #24a638; }
.btn { height: 44px; border-radius: 8px; background: #fcfcfc; box-shadow: 0 1px 1px #aaa; }
.b1 { width: 52px; margin-left: 10px; }
.b2 { width: 52px; margin-left: 3px; }
.b3 { width: 74px; margin-left: 15px; }
.url { width: 1016px; height: 44px; margin-left: 380px; background: #fcfcfc; border-radius: 8px; box-shadow: 0 1px 1px #aaa; display: flex; align-items: center; padding-left: 460px; }
.url span { font-size: 26px; margin-left: 11px; line-height: 44px; padding-top: 2px; width: 70px; color: #000; }
.url .reload { margin-left: auto; margin-right: 13px; }
.b4 { width: 74px; margin-left: 542px; }
.b5 { width: 74px; margin-left: 16px; }
.tabbar { height: 48px; display: flex; padding-left: 1.500px; border-top: 2px solid #aeacaf; border-bottom: 2px solid #a09da1; background: linear-gradient(#cbc9cc, #c3c1c4); }
.tab { width: 270.400px; text-align: center; font-size: 22.500px; letter-spacing: .3px; line-height: 46px; color: #5b595c; border-right: 2px solid #aeacaf; white-space: nowrap; padding-right: 4px; }
.cur { color: #222; background: #dad8db; }
.plus { flex: 1; display: flex; align-items: center; justify-content: center; }

.page { position: relative; height: 1349px; background: #f2f2f2; color: #69738a; overflow: hidden; font-size: 28px; }
.topnav { height: 86px; background: #fff; display: flex; align-items: flex-start; line-height: 76px; white-space: nowrap; }
.topnav > svg { margin: 21px 0 0 7px; }
.logo { font-size: 42px; color: #477dda; line-height: 74px; margin-left: 10px; width: 111px; }
.topnav nav { display: flex; gap: 89px; margin-left: 108px; }
.act { color: #477dda; font-weight: 700; letter-spacing: -.5px; }
.feedback { margin-left: 598px; width: 124px; }
.count { margin: 21px 0 0 83px; width: 36px; height: 36px; line-height: 36px; text-align: center; background: #477dda; color: #fff; }
.user { margin-left: 94px; width: 110px; color: #8a8a8a; }
.caret { border: 8px solid transparent; border-top-color: #000; border-bottom: 0; width: 0; height: 0; flex: none; }
.topnav .caret { margin: 37px 0 0 9px; }
.files { height: 58px; background: #fff; display: flex; box-shadow: inset 0 -2px #ccc; }
.folder { width: 62px; border: 2px solid #ccc; border-left: 0; padding: 18px 0 0 16px; }
.file { width: 290px; height: 58px; border: 2px solid #ccc; display: flex; padding: 12px 0 0 8px; margin-left: 10px; white-space: nowrap; }
.file.open { margin-left: 20px; background: #f2f2f2; border-bottom: 0; }
.file span { line-height: 38px; margin-left: 7px; }
.fbtn { height: 46px; margin-left: 10px; display: flex; align-items: center; color: #fff; font-size: 21px; letter-spacing: .2px; font-weight: 600; white-space: nowrap; box-shadow: 0 2px 3px #ccc; }
.fbtn span { line-height: 46px; padding-top: 1px; }
.grid { width: 170px; background: #8c96b0; padding-left: 14px; gap: 11px; }
.imp { width: 152px; background: #477dda; padding-left: 14px; gap: 11px; }
.toolbar { height: 120px; display: flex; padding-left: 17px; }
.group { display: flex; gap: 30px; padding-top: 28px; }
.g0 { gap: 29px; }
.g1 { margin-left: 120px; } .g2 { margin-left: 121px; } .g3 { margin-left: 123px; }
.tool { display: flex; flex-direction: column; align-items: center; font-size: 20px; font-weight: 600; white-space: nowrap; }
.tool span { margin-top: 8px; line-height: 25px; letter-spacing: -.25px; }
.on { color: #477dda; }
.chat { margin: 30px 0 0 353px; }
.share { margin: 16px 0 0 32px; width: 99px; height: 54px; line-height: 54px; background: #477dda; color: #fff; text-align: center; box-shadow: 0 2px 4px #ccc; }
.work { display: flex; height: 1085px; }
.gallery { width: 355px; border-left: 4px solid #d8d8d8; overflow: hidden; }
.stub { width: 20px; height: 76px; background: #c6c6c6; }
.card { width: 303px; margin-left: 21px; border: 2px solid #ccc; background: #fff; }
.c1 { margin-top: 490px; height: 381px; }
.cap { height: 50px; border-top: 2px solid #ccc; background: #ebedef; text-align: center; font-size: 24px; line-height: 46px; }
.c2 { margin-top: 21px; height: 160px; }
.gscroll { width: 25px; background: #cbcbcb; }
.chart { width: 1512px; height: 984px; margin: 30px 0 0 104px; border: 2px solid #ccc; background: #fff; }
.fade { position: absolute; left: 0; right: 0; bottom: 0; height: 80px; background: linear-gradient(rgba(0, 0, 0, 0), rgba(0, 0, 0, .07)); }
.contact { position: absolute; left: 1940px; bottom: 0; width: 500px; height: 65px; padding: 5px 25px 0 20px; display: flex; align-items: center; justify-content: space-between; background: linear-gradient(#fefefe, #ececec); box-shadow: 0 0 24px rgba(0, 0, 0, .3); font-family: "DejaVu Sans", sans-serif; font-size: 26.500px; color: #2b2b2b; white-space: nowrap; }

.dialog { position: absolute; left: 20px; top: 378px; width: 1020px; height: 676px; background: #fff; border: 2px solid #ccc; border-top: 0; box-shadow: 0 10px 40px rgba(0, 0, 0, .4); font-size: 28px; color: #111; white-space: nowrap; }
.dhead { height: 210px; background: #ccc; }
.dtitle { height: 74px; display: flex; justify-content: space-between; padding: 0 33px 0 10px; line-height: 67px; font-weight: 600; letter-spacing: -.6px; }
.dtitle svg { margin-top: 23px; }
.drop { background: #f3f3f3; border: 2px solid #bbb; height: 62px; display: flex; align-items: center; box-shadow: 1px 3px 4px rgba(0, 0, 0, .15); color: #222; }
.drop .sw { width: 26px; height: 26px; background: #2678b2; border: 1px solid #5d7381; }
.drop span { line-height: 58px; padding-top: 4px; }
.mean { width: 219px; margin-left: 10px; padding-left: 41px; }
.mean span { margin-left: 27px; width: 91px; }
.dtabs { display: flex; gap: 10px; margin-top: 12px; }
.dtabs span { height: 62px; line-height: 62px; text-align: center; background: #e8e8e8; color: #69738a; }
.dtabs .cur { background: #fff; }
.dbody { padding: 17px 0 0 28px; }
.drow { height: 86px; display: flex; align-items: center; }
.r2 { height: 84px; }
.drow label { width: 200px; position: relative; top: -3px; }
.inp { width: 100px; height: 62px; border: 2px solid #ccc; line-height: 60px; padding-left: 10px; color: #000; }
.pm { display: flex; margin-left: 20px; width: 66px; height: 42px; border: 2px solid #bbb; background: #f3f3f3; box-shadow: 1px 3px 4px rgba(0, 0, 0, .15); }
.pm b { flex: 1; display: grid; place-items: center; }
.pm b + b { border-left: 2px solid #bbb; }
.pm i { grid-area: 1 / 1; width: 22px; height: 6px; border-radius: 2px; background: #222; }
.pm .v { width: 6px; height: 22px; }
.slide { display: flex; align-items: center; margin-left: 6px; position: relative; top: -1px; }
.slide b { width: 24px; height: 40px; border: 2px solid #bbb; background: #f3f3f3; }
.slide i { width: 146px; height: 16px; border: 2px solid #bbb; border-left: 0; border-radius: 0 5px 5px 0; background: #f5f5f5; }
.slide.end { margin-left: 16px; }
.end i { border-left: 2px solid #bbb; border-right: 0; border-radius: 5px 0 0 5px; }
.fill { width: 200px; position: relative; top: -3px; }
.color { width: 100px; height: 60px; border: 2px solid #8f7660; background: #eee; display: flex; align-items: center; padding-left: 8px; }
.color i { width: 50px; height: 40px; border: 2px solid #222; background: #444; }
.color .blue { background: #2678b2; }
.color em { margin-left: 13px; border: 7px solid transparent; border-top: 14px solid #333; border-bottom: 0; }
.bord { width: 185px; padding-left: 41px; margin-right: 10px; }
.bord span { margin-left: 27px; width: 57px; }

.dock { position: absolute; left: 42px; top: 1522px; width: 2476px; height: 78px; border-radius: 10px 10px 0 0; display: flex; padding-left: 6px; background: linear-gradient(90deg, #4f6b4c 0, #5e6c58 7%, #74695f 15%, #807b72 22%, #807a80 29%, #8c858a 42%, #998a95 49%, #8d8a88 57%, #8d7c78 68%, #8e776d 75%, #867869 85%, #5a6b50 95%, #4f6b4c 100%); box-shadow: 0 -1px #666; }
.dk { width: 59.450px; flex: none; }
.rule { width: 2px; height: 58px; margin: 10px 11px 0 13px; background: #4d443b; flex: none; }
</style>
